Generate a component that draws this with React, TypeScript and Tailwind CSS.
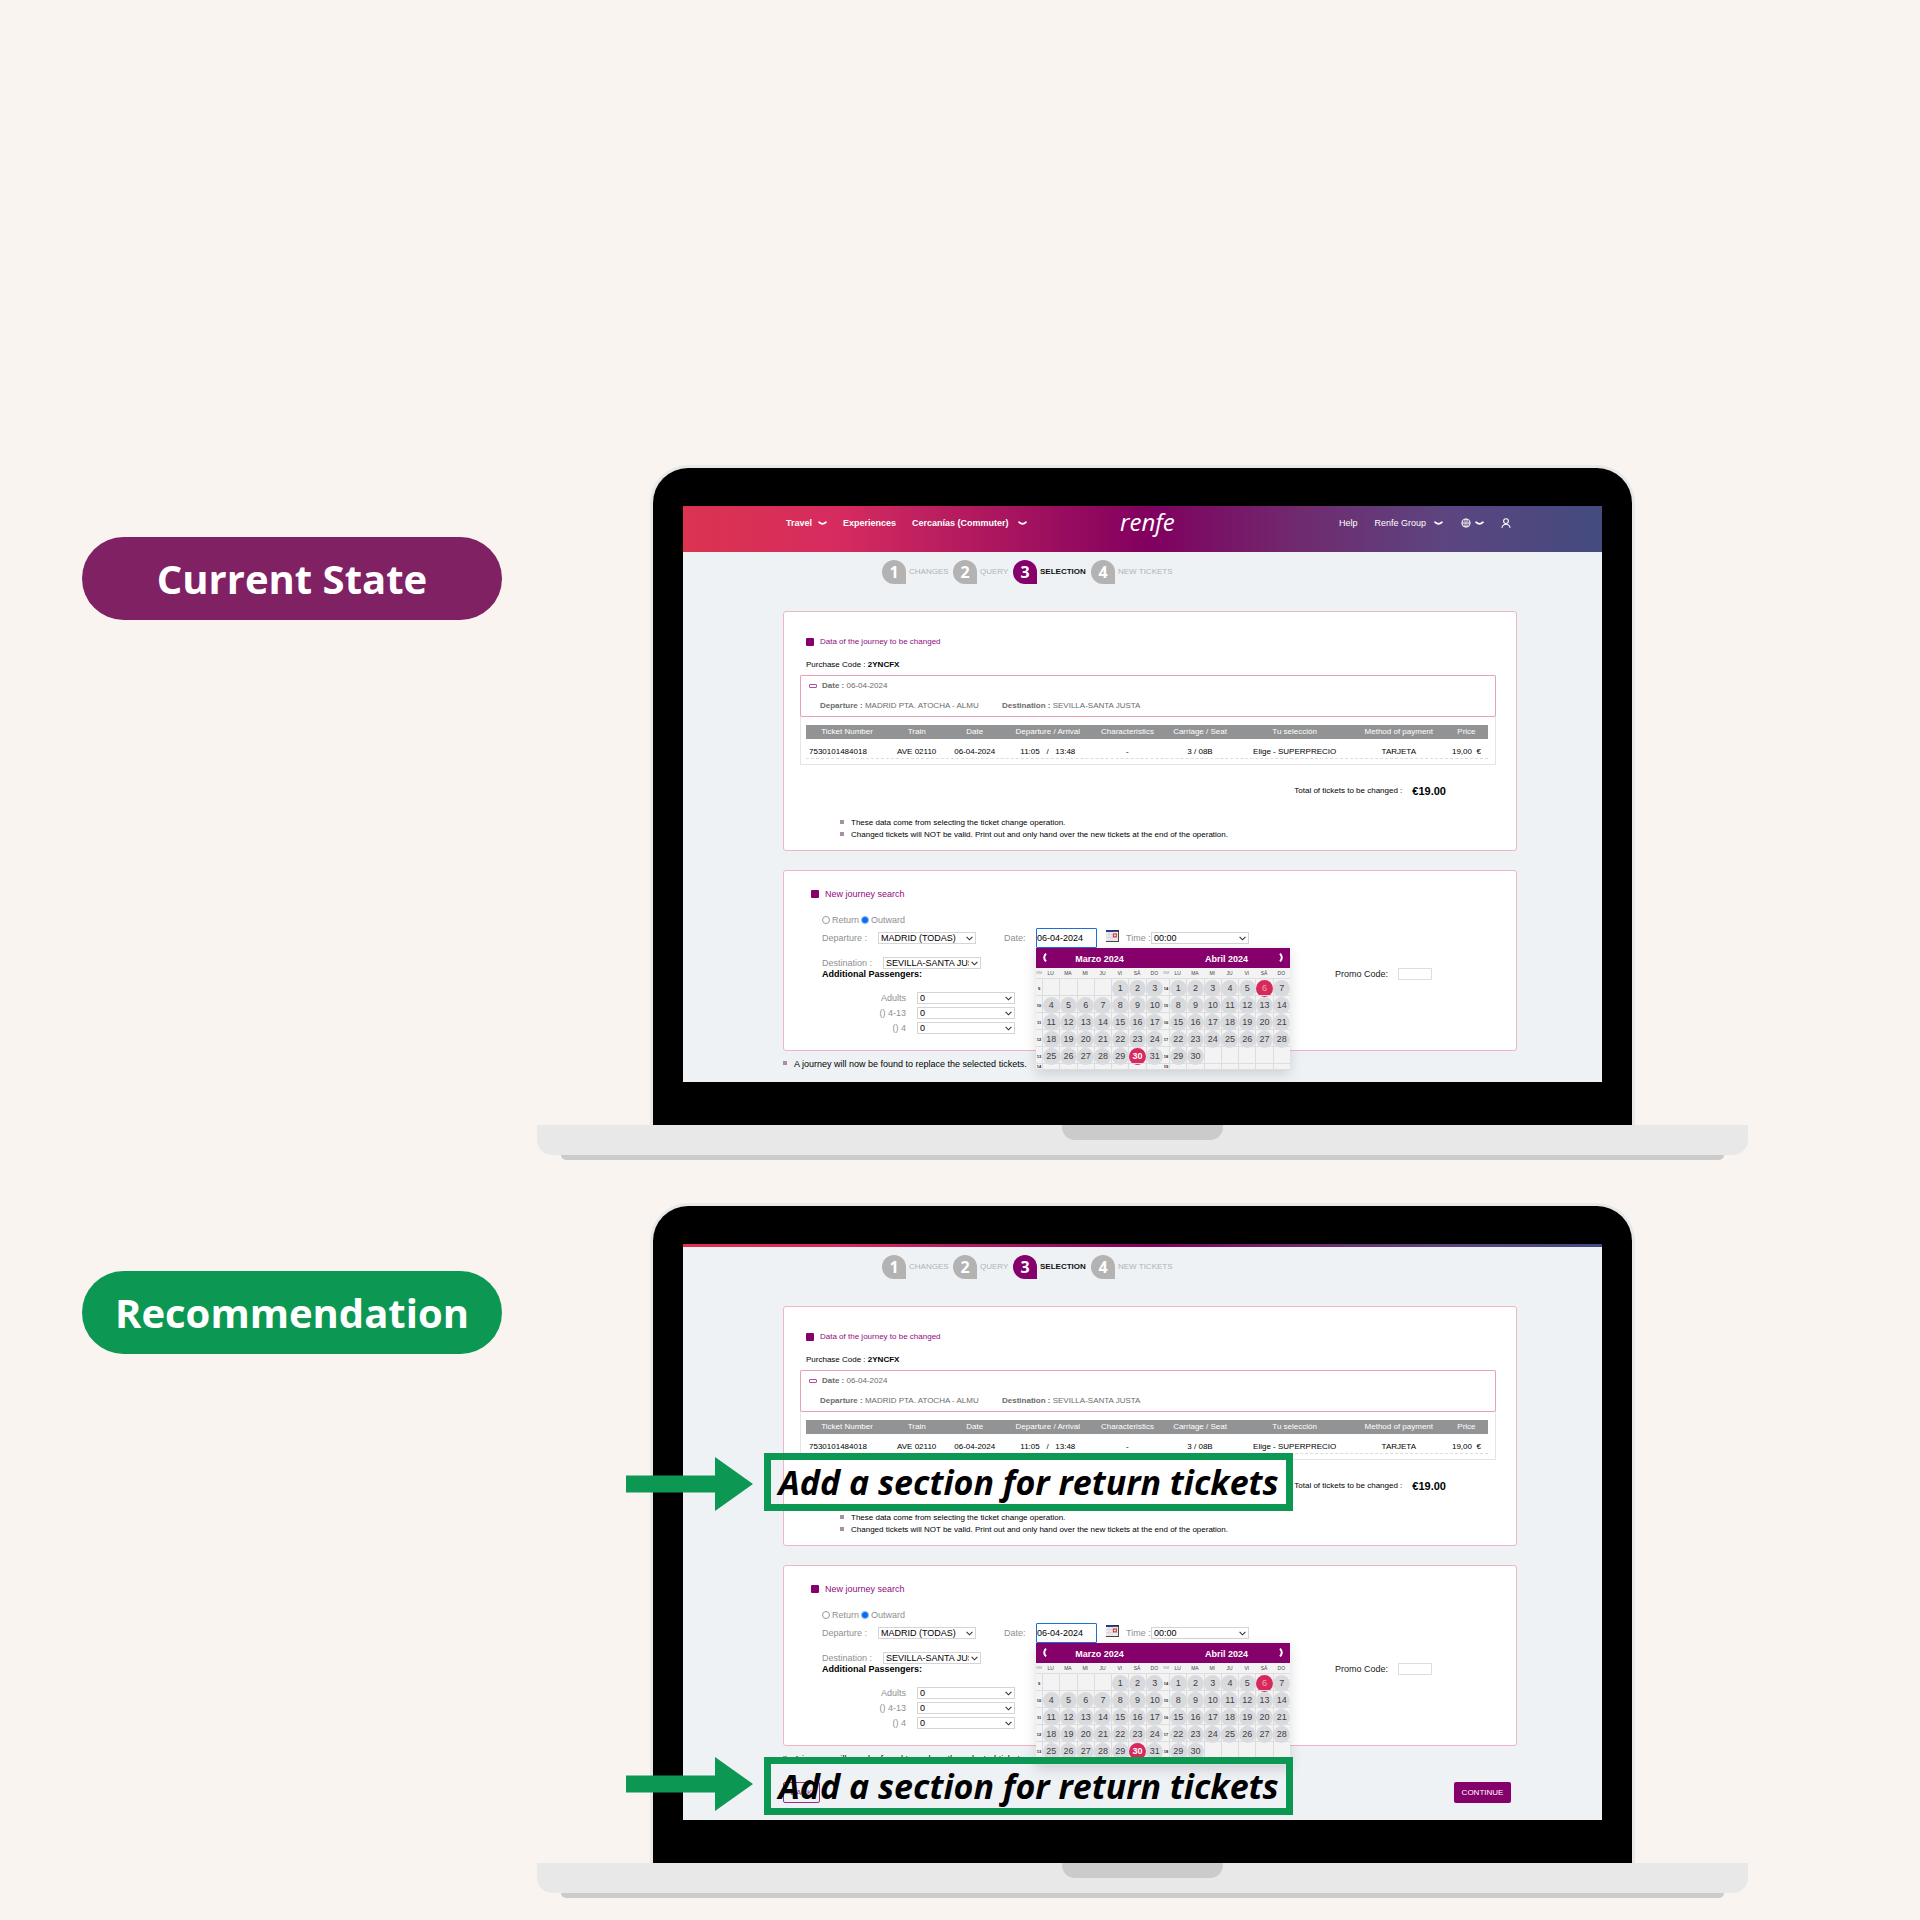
import type { ReactNode } from "react";

type Option = { id: string; label: string; value: string; width: string; gap: string };

const steps = [
  { n: 1, label: "CHANGES", width: "w-[71px]" },
  { n: 2, label: "QUERY", width: "w-[60px]" },
  { n: 3, label: "SELECTION", width: "w-[78px]", active: true },
  { n: 4, label: "NEW TICKETS", width: "w-[90px]" },
];

const columns = [
  { title: "Ticket Number", width: "w-[82px]", value: "7530101484018" },
  { title: "Train", width: "w-[57px]", value: "AVE 02110" },
  { title: "Date", width: "w-[59px]", value: "06-04-2024" },
  { title: "Departure / Arrival", width: "w-[87px]", value: "11:05\u00a0\u00a0 / \u00a0\u00a013:48" },
  { title: "Characteristics", width: "w-[72px]", value: "-" },
  { title: "Carriage / Seat", width: "w-[73px]", value: "3 / 08B" },
  { title: "Tu selección", width: "w-[116px]", value: "Elige - SUPERPRECIO" },
  { title: "Method of payment", width: "w-[92px]", value: "TARJETA" },
  { title: "Price", width: "w-[43px]", value: "19,00\u00a0 €" },
];

const weekdays = ["LU", "MA", "MI", "JU", "VI", "SÁ", "DO"];

function NavCaret() {
  return (
    <svg viewBox="0 0 9 5" className="h-[5px] w-[9px]" fill="none" stroke="currentColor" strokeWidth="1.7" strokeLinecap="round">
      <path d="M1 1.2 Q4.5 4.4 8 1.2" />
    </svg>
  );
}

function Header() {
  return (
    <header className="flex h-[46px] items-start bg-[linear-gradient(90deg,#db3350_0%,#d62b5f_17%,#a9155f_35%,#80005f_51%,#702a6e_67%,#5c4580_83%,#434b7e_100%)] pl-[103px] pr-[91px] text-[9px] leading-[12px] text-white">
      <nav className="mt-[11px] flex w-[334px] items-center font-bold">
        <a href="#travel" className="flex items-center gap-[6px]">
          Travel <NavCaret />
        </a>
        <a href="#experiences" className="ml-4">Experiences</a>
        <a href="#cercanias" className="ml-4 flex items-center gap-[9px] whitespace-nowrap">
          Cercanías (Commuter) <NavCaret />
        </a>
      </nav>
      <a href="#home" className="mt-[4px] w-[62px] font-['Open_Sans'] text-[24px] font-medium italic leading-[24px]">
        renfe
      </a>
      <nav className="ml-auto mt-[11px] flex items-center">
        <a href="#help">Help</a>
        <a href="#group" className="ml-[17px] flex items-center gap-[8px] whitespace-nowrap">
          Renfe Group <NavCaret />
        </a>
        <button type="button" aria-label="Language" className="ml-[18px] flex items-center gap-1">
          <svg viewBox="0 0 10 10" className="size-[10px]" fill="none" stroke="currentColor" strokeWidth="0.8">
            <circle cx="5" cy="5" r="4" strokeWidth="1.1" />
            <path d="M5 1v8M1 5h8" />
            <ellipse cx="5" cy="5" rx="2" ry="4" strokeWidth="0.5" />
          </svg>
          <NavCaret />
        </button>
        <button type="button" aria-label="Account" className="ml-[17px]">
          <svg viewBox="0 0 10 10" className="size-[10px]" fill="none" stroke="currentColor" strokeWidth="1.1" strokeLinecap="round">
            <circle cx="5" cy="3.1" r="2.4" />
            <path d="M1 9.4 C1.6 7 3 6.2 5 6.2 S8.4 7 9 9.4" />
          </svg>
        </button>
      </nav>
    </header>
  );
}

function HeaderEdge() {
  return <div className="h-[3px] bg-[linear-gradient(90deg,#db3350_0%,#d62b5f_17%,#a9155f_35%,#80005f_51%,#702a6e_67%,#5c4580_83%,#434b7e_100%)]" />;
}

function Steps() {
  return (
    <ol className="mt-2 flex h-[24px] pl-[199px] text-[8px]">
      {steps.map((s) => (
        <li key={s.n} className={"flex items-center gap-[3px] whitespace-nowrap " + s.width}>
          <span
            className={
              "flex size-[24px] shrink-0 items-center justify-center rounded-full rounded-br-[2px] font-['Open_Sans'] text-[16px] font-bold leading-[24px] text-white " +
              (s.active ? "bg-[#85006b]" : "bg-[#b3b3b3]")
            }
          >
            {s.n}
          </span>
          <span className={s.active ? "font-bold text-[#111]" : "text-[#b0b2b4]"}>{s.label}</span>
        </li>
      ))}
    </ol>
  );
}

function SectionTitle({ children }: { children: ReactNode }) {
  return (
    <h2 className="flex h-3 items-center text-[#8f0a80]">
      <span className="mr-[6px] size-[8px] rounded-[1px] bg-[#85006b]" />
      {children}
    </h2>
  );
}

function JourneyData() {
  return (
    <section className="rounded-[3px] border border-[#f1b3c6] bg-white pt-[24px] pb-[9px] text-[8px] leading-[12px] text-black">
      <div className="pl-[22px]">
        <SectionTitle>Data of the journey to be changed</SectionTitle>
        <p className="mt-[11px]">
          Purchase Code : <b>2YNCFX</b>
        </p>
      </div>
      <div className="mt-[4px] ml-4 mr-5 border border-t-0 border-[#e4e4e6]">
        <div className="-mx-px rounded-[2px] border border-[#e9a0b7] pt-1 pb-1 text-[#6b6c6e]">
          <p className="flex items-center pl-[8px]">
            <span className="mr-[5px] h-[4px] w-[8px] rounded-[1px] border border-[#b34da6]" />
            <span><b>Date :</b> 06-04-2024</span>
          </p>
          <p className="mt-2 flex pl-[19px]">
            <span className="w-[182px]"><b>Departure :</b> MADRID PTA. ATOCHA - ALMU</span>
            <span><b>Destination :</b> SEVILLA-SANTA JUSTA</span>
          </p>
        </div>
        <div className="pt-2 pr-[7px] pb-[5px] pl-[5px]">
          <div className="border-b border-dashed border-[#dcdcdc]">
            <table className="w-full table-fixed border-collapse">
              <thead>
                <tr className="bg-[#929394] text-white">
                  {columns.map((c) => (
                    <th key={c.title} scope="col" className={"h-[14px] whitespace-nowrap p-0 text-center font-normal " + c.width}>
                      {c.title}
                    </th>
                  ))}
                </tr>
              </thead>
              <tbody>
                <tr>
                  {columns.map((c, i) => (
                    <td key={c.title} className={"whitespace-nowrap px-0 pt-[7px] pb-0 " + (i === 0 ? "pl-[3px] text-left" : "text-center")}>
                      {c.value}
                    </td>
                  ))}
                </tr>
              </tbody>
            </table>
          </div>
        </div>
      </div>
      <p className="mt-[19px] flex h-[13px] items-center justify-end pr-[70px]">
        <span className="mr-[10px]">Total of tickets to be changed :</span>
        <b className="text-[11px]">€19.00</b>
      </p>
      <ul className="mt-5 pl-[56px]">
        <Note>These data come from selecting the ticket change operation.</Note>
        <Note>Changed tickets will NOT be valid. Print out and only hand over the new tickets at the end of the operation.</Note>
      </ul>
    </section>
  );
}

function Note({ children }: { children: ReactNode }) {
  return (
    <li className="flex items-start">
      <span className="mt-[3px] mr-[7px] size-[4px] bg-[#a98ea6]" />
      {children}
    </li>
  );
}

function Select({ id, value, width, scope }: { id: string; value: string; width: string; scope: string }) {
  return (
    <span className={"relative block h-[12px] shrink-0 " + width}>
      <select
        id={scope + id}
        className="block h-[12px] w-full appearance-none overflow-hidden border border-[#d5d5d7] bg-white pl-[2px] pr-[11px] text-[9px] leading-[10px] text-black"
      >
        <option>{value}</option>
      </select>
      <svg viewBox="0 0 7 5" className="pointer-events-none absolute top-[4px] right-[3px] h-[5px] w-[7px]" fill="none" stroke="#333" strokeWidth="1.1">
        <path d="M.6 .8 L3.5 3.8 L6.4 .8" />
      </svg>
    </span>
  );
}

function Day({ n, mark }: { n: number | null; mark?: "strong" | "faded" }) {
  if (n === null) return <span className="border-t border-l border-[#dddddf]" />;
  const look =
    mark === "strong"
      ? "bg-[#d8295c] font-bold text-white"
      : mark === "faded"
        ? "bg-[#d8295c] text-[#f0a6bb]"
        : "bg-[#d9dade] text-[#3f4043]";
  return (
    <span className="flex items-center justify-center border-t border-l border-[#dddddf]">
      <button type="button" className={"-m-px size-[17px] shrink-0 rounded-full text-center text-[9px] leading-[17px] " + look}>
        {n}
      </button>
    </span>
  );
}

function Month({ name, offset, days, firstWeek, marked, faded, prev }: { name: string; offset: number; days: number; firstWeek: number; marked: number; faded?: boolean; prev: boolean }) {
  const rows = [0, 1, 2, 3, 4];
  return (
    <div className="flex-1">
      <div className="relative flex h-5 items-center justify-center bg-[#85006b] pt-px text-[9px] font-bold text-white">
        <span>{name}</span>
        <button
          type="button"
          aria-label={prev ? "Previous month" : "Next month"}
          className={"absolute top-[5px] " + (prev ? "left-[6px]" : "right-[6px]")}
        >
          <svg viewBox="0 0 5 9" className="h-[9px] w-[5px]" fill="none" stroke="currentColor" strokeWidth="1.9">
            <path d={prev ? "M4 .6 Q.4 4.5 4 8.4" : "M1 .6 Q4.6 4.5 1 8.4"} />
          </svg>
        </button>
      </div>
      <div className="grid h-[10px] grid-cols-[6px_repeat(7,1fr)] items-center text-center text-[5px] leading-[10px] text-[#444]">
        <span className="text-[4px] text-[#999]">SM</span>
        {weekdays.map((d) => (
          <span key={d}>{d}</span>
        ))}
      </div>
      {rows.map((r) => (
        <div key={r} className="grid h-[17px] grid-cols-[6px_repeat(7,1fr)]">
          <span className="border-t border-[#dddddf] text-center text-[4px] font-bold leading-[19px] text-[#222]">{firstWeek + r}</span>
          {weekdays.map((d, c) => {
            const n = r * 7 + c - offset + 1;
            return <Day key={d} n={n > 0 && n <= days ? n : null} mark={n === marked ? (faded ? "faded" : "strong") : undefined} />;
          })}
        </div>
      ))}
      <div className="grid h-[7px] grid-cols-[6px_repeat(7,1fr)] border-b border-[#dddddf]">
        <span className="border-t border-[#dddddf] text-center text-[4px] font-bold leading-[5px] text-[#222]">{firstWeek + 5}</span>
        {weekdays.map((d) => (
          <span key={d} className="border-t border-l border-[#dddddf]" />
        ))}
      </div>
    </div>
  );
}

function Calendar() {
  return (
    <div className="absolute top-full left-0 z-10 flex w-[254px] bg-[#f3f3f4] shadow-[0_4px_12px_rgba(0,0,0,0.14)]">
      <Month name="Marzo 2024" offset={4} days={31} firstWeek={9} marked={30} prev />
      <Month name="Abril 2024" offset={0} days={30} firstWeek={14} marked={6} faded prev={false} />
    </div>
  );
}

function CalendarIcon() {
  return (
    <svg viewBox="0 0 13 12" className="h-[12px] w-[13px]">
      <rect x="0" y="0" width="13" height="12" fill="#4a4646" />
      <rect x="0" y="0" width="12" height="11" fill="#efe9ea" />
      <rect x="0" y="0" width="13" height="1.8" fill="#2a2a52" />
      <rect x="0" y="0" width="7" height="1.8" fill="#2338a0" />
      <path d="M0 4.500h12M0 7.500h12M3 2v9M6 2v9" stroke="#d3ced6" strokeWidth="0.6" />
      <rect x="7.500" y="4" width="2.800" height="2.800" fill="#fff" stroke="#cc3f3f" strokeWidth="1.200" />
    </svg>
  );
}

const passengers: Option[] = [
  { id: "adults", label: "Adults", value: "0", width: "w-[98px]", gap: "" },
  { id: "children", label: "() 4-13", value: "0", width: "w-[98px]", gap: "mt-[3px]" },
  { id: "infants", label: "() 4", value: "0", width: "w-[98px]", gap: "mt-[3px]" },
];

function Radio({ id, scope, label, checked }: { id: string; scope: string; label: string; checked?: boolean }) {
  return (
    <span className="flex items-center gap-[2px]">
      <input
        id={scope + id}
        type="radio"
        name={scope + "direction"}
        defaultChecked={checked}
        className="size-[8px] appearance-none rounded-full border border-[#9a9a9a] bg-white checked:border-[#8bbcff] checked:bg-[#0a6cf5]"
      />
      <label htmlFor={scope + id}>{label}</label>
    </span>
  );
}

function JourneySearch({ scope }: { scope: string }) {
  return (
    <section className="mt-[19px] rounded-[3px] border border-[#f1b3c6] bg-white pt-[17px] pb-[16px] text-[9px] leading-[12px] text-[#8e8f91]">
      <div className="pl-[27px]">
        <SectionTitle>New journey search</SectionTitle>
      </div>
      <form className="pl-[38px]">
        <div className="mt-[14px] flex h-3 items-center gap-[2px]">
          <Radio id="return" scope={scope} label="Return" />
          <Radio id="outward" scope={scope} label="Outward" checked />
        </div>
        <div className="mt-[2px] flex h-5 items-center whitespace-nowrap">
          <label htmlFor={scope + "departure"} className="w-[56px]">Departure :</label>
          <Select id="departure" scope={scope} value="MADRID (TODAS)" width="w-[98px]" />
          <label htmlFor={scope + "date"} className="ml-7 w-[32px]">Date:</label>
          <div className="relative">
            <input
              id={scope + "date"}
              type="text"
              defaultValue="06-04-2024"
              className="block h-5 w-[61px] rounded-[1px] border border-[#1d6fd8] bg-white p-0 text-[9px] text-black"
            />
            <Calendar />
          </div>
          <button type="button" aria-label="Open calendar" className="ml-[9px] -mt-1">
            <CalendarIcon />
          </button>
          <label htmlFor={scope + "time"} className="ml-[7px] w-[25px]">Time :</label>
          <Select id="time" scope={scope} value="00:00" width="w-[98px]" />
        </div>
        <div className="mt-[9px] flex h-3 items-center whitespace-nowrap">
          <label htmlFor={scope + "destination"} className="w-[61px]">Destination :</label>
          <Select id="destination" scope={scope} value="SEVILLA-SANTA JUSTA" width="w-[98px]" />
        </div>
        <div className="flex h-[10px] items-center">
          <b className="w-[513px] text-black">Additional Passengers:</b>
          <label htmlFor={scope + "promo"} className="w-[63px] whitespace-nowrap text-[#222]">Promo Code:</label>
          <input id={scope + "promo"} type="text" className="h-[12px] w-[34px] border border-[#dedee2] bg-white" />
        </div>
        <div className="mt-[13px]">
          {passengers.map((p) => (
            <div key={p.id} className={"flex h-3 items-center " + p.gap}>
              <label htmlFor={scope + p.id} className="mr-[11px] w-[84px] text-right">{p.label}</label>
              <Select id={p.id} scope={scope} value={p.value} width={p.width} />
            </div>
          ))}
        </div>
      </form>
    </section>
  );
}

function BookingPage({ scope, scrolled }: { scope: string; scrolled?: boolean }) {
  return (
    <div className="h-full bg-[#eef2f5] font-['Liberation_Sans',Arial,sans-serif]">
      {scrolled ? <HeaderEdge /> : <Header />}
      <Steps />
      <main className="mt-[27px] pl-[100px] pr-[85px]">
        <JourneyData />
        <JourneySearch scope={scope} />
        <ul className="mt-[7px] text-[9px] leading-[12px] text-black">
          <Note>A journey will now be found to replace the selected tickets.</Note>
        </ul>
        {scrolled && (
          <div className="mt-[17px] flex justify-between pr-[6px] text-[8px]">
            <button type="button" className="h-[21px] w-[37px] rounded-[2px] border border-[#9b2b8b] text-[#9b2b8b]">BACK</button>
            <button type="button" className="h-[21px] w-[57px] rounded-[2px] bg-[#85006b] text-white">CONTINUE</button>
          </div>
        )}
      </main>
    </div>
  );
}

function Laptop({ children }: { children: ReactNode }) {
  return (
    <div>
      <div className="mx-[113px] rounded-t-[38px] border-x-[3px] border-t-[3px] border-[#e8e8e8] bg-black px-[30px] pt-[38px] pb-[43px]">
        <div className="h-[576px] overflow-hidden">{children}</div>
      </div>
      <div className="flex h-[30px] justify-center rounded-b-[15px] bg-[#e8e8e8]">
        <div className="h-[15px] w-[161px] rounded-b-[13px] bg-[#cbcbcb]" />
      </div>
      <div className="mx-[24px] h-[5px] rounded-b-[5px] bg-[#cbcbcb]" />
    </div>
  );
}

function Callout({ position, arrow }: { position: string; arrow: string }) {
  return (
    <div className={"absolute left-[89px] z-20 flex items-start gap-[11px] " + position}>
      <svg viewBox="0 0 127 54" className={"h-[54px] w-[127px] " + arrow} fill="#0c9853">
        <path d="M0 18.500H89V0L127 27L89 54V35.500H0Z" />
      </svg>
      <p className="flex h-[58px] w-[529px] items-center justify-center whitespace-nowrap border-[7px] border-[#0c9853] font-['Open_Sans',sans-serif] text-[34px] font-bold italic leading-[44px] text-black">
        Add a section for return tickets
      </p>
    </div>
  );
}

function Pill({ className, children }: { className: string; children: ReactNode }) {
  return (
    <h1 className={"flex h-[83px] w-[420px] shrink-0 items-center justify-center rounded-full pt-px font-['Open_Sans',sans-serif] text-[40px] font-bold leading-[54px] text-white " + className}>
      {children}
    </h1>
  );
}

export default function App() {
  return (
    <div className="flex min-h-screen flex-col gap-[43px] bg-[#f9f4ef] pt-[465px] pr-[172px] pb-[22px] pl-[82px]">
      <div className="flex items-start gap-[35px]">
        <Pill className="mt-[72px] bg-[#802164]">Current State</Pill>
        <div className="flex-1">
          <Laptop>
            <BookingPage scope="current-" />
          </Laptop>
        </div>
      </div>
      <div className="flex items-start gap-[35px]">
        <Pill className="mt-[68px] bg-[#0c9853]">Recommendation</Pill>
        <div className="relative flex-1">
          <Laptop>
            <BookingPage scope="recommended-" scrolled />
          </Laptop>
          <Callout position="top-[250px]" arrow="mt-[4px]" />
          <Callout position="top-[554px]" arrow="mt-0" />
        </div>
      </div>
    </div>
  );
}
